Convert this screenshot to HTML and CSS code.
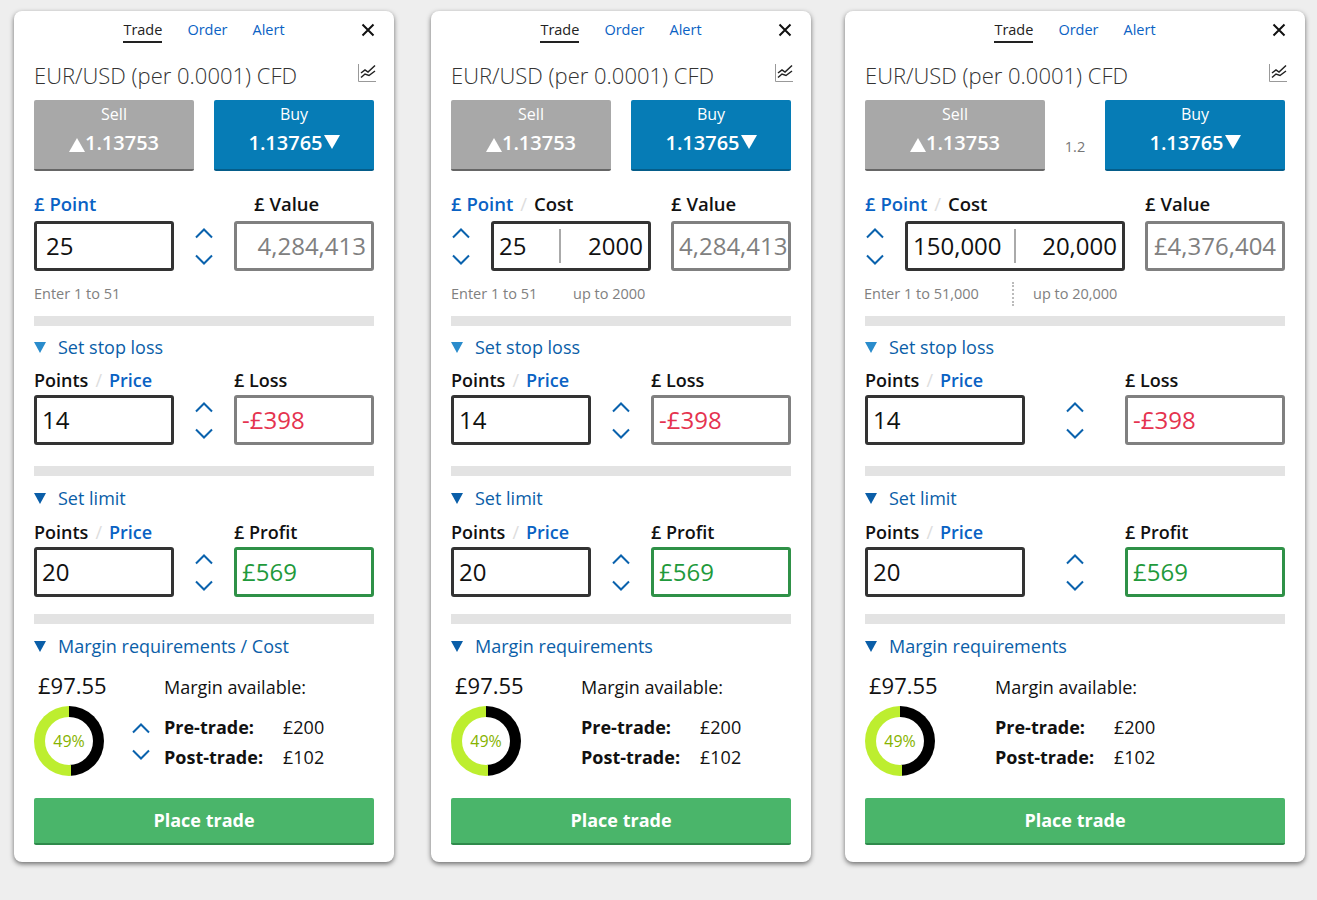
FILE: index.html
```html
<!DOCTYPE html>
<html lang="en">
<head>
    <meta charset="UTF-8">
    <title>Trade ticket</title>
    <link rel="stylesheet" href="styles.css">
</head>
<body>
    <svg class="defs" width="0" height="0">
        <symbol id="up" viewBox="0 0 20 14"><path d="M2 11.5 L10 3.5 L18 11.5" fill="none" stroke="#0a62ad" stroke-width="2"/></symbol>
        <symbol id="down" viewBox="0 0 20 14"><path d="M2 2.5 L10 10.5 L18 2.5" fill="none" stroke="#0a62ad" stroke-width="2"/></symbol>
        <symbol id="close" viewBox="0 0 14 14"><path d="M1.5 1.5 L12.5 12.5 M12.5 1.5 L1.5 12.5" fill="none" stroke="#111" stroke-width="2"/></symbol>
        <symbol id="chart" viewBox="0 0 18 18">
            <path d="M.5 0 V17.5 H18" fill="none" stroke="#999" stroke-width="1"/>
            <path d="M3 9 L7 6 L10 8 L17 1.5 M3 13.5 L7 10 L11 11.5 L17 7" fill="none" stroke="#222" stroke-width="1.5"/>
        </symbol>
    </svg>

    <!-- ticket 1 -->
    <div class="card">
        <div class="tabs">
            <span class="tab active">Trade</span>
            <span class="tab">Order</span>
            <span class="tab">Alert</span>
            <svg class="close"><use href="#close"/></svg>
        </div>
        <div class="title">
            <span>EUR/USD (per 0.0001) CFD</span>
            <svg class="chart"><use href="#chart"/></svg>
        </div>
        <div class="prices">
            <div class="price sell"><span class="price-label">Sell</span><span class="price-value"><i class="tri-up"></i>1.13753</span></div>
            <div class="price buy"><span class="price-label">Buy</span><span class="price-value">1.13765<i class="tri-down"></i></span></div>
        </div>

        <div class="labels labels-top">
            <span class="w-200"><b class="link">£ Point</b></span>
            <span class="lbl-value"><b>£ Value</b></span>
        </div>
        <div class="inputs">
            <div class="box box-dark w-140 pad-12">25</div>
            <div class="stepper w-60"><svg><use href="#up"/></svg><svg><use href="#down"/></svg></div>
            <div class="box box-grey w-140 align-right">4,284,413</div>
        </div>
        <div class="hints"><span>Enter 1 to 51</span></div>
        <div class="rule"></div>

        <div class="section"><i class="tri-section light"></i>Set stop loss</div>
        <div class="labels">
            <span class="w-200"><b>Points</b><em>/</em><b class="link">Price</b></span>
            <span><b>£ Loss</b></span>
        </div>
        <div class="inputs">
            <div class="box box-dark w-140">14</div>
            <div class="stepper w-60"><svg><use href="#up"/></svg><svg><use href="#down"/></svg></div>
            <div class="box box-grey w-140 loss">-£398</div>
        </div>
        <div class="rule rule-a"></div>

        <div class="section"><i class="tri-section"></i>Set limit</div>
        <div class="labels">
            <span class="w-200"><b>Points</b><em>/</em><b class="link">Price</b></span>
            <span><b>£ Profit</b></span>
        </div>
        <div class="inputs">
            <div class="box box-dark w-140">20</div>
            <div class="stepper w-60"><svg><use href="#up"/></svg><svg><use href="#down"/></svg></div>
            <div class="box box-green w-140 profit">£569</div>
        </div>
        <div class="rule rule-b"></div>

        <div class="section"><i class="tri-section"></i>Margin requirements / Cost</div>
        <div class="margin">
            <div class="margin-left">
                <div class="amount">£97.55</div>
                <div class="ring"><span>49%</span></div>
            </div>
            <div class="stepper margin-stepper"><svg><use href="#up"/></svg><svg><use href="#down"/></svg></div>
            <div class="margin-right">
                <div class="avail">Margin available:</div>
                <div class="trade-row"><b>Pre-trade:</b><span>£200</span></div>
                <div class="trade-row"><b>Post-trade:</b><span>£102</span></div>
            </div>
        </div>
        <div class="place">Place trade</div>
    </div>

    <!-- ticket 2 -->
    <div class="card">
        <div class="tabs">
            <span class="tab active">Trade</span>
            <span class="tab">Order</span>
            <span class="tab">Alert</span>
            <svg class="close"><use href="#close"/></svg>
        </div>
        <div class="title">
            <span>EUR/USD (per 0.0001) CFD</span>
            <svg class="chart"><use href="#chart"/></svg>
        </div>
        <div class="prices">
            <div class="price sell"><span class="price-label">Sell</span><span class="price-value"><i class="tri-up"></i>1.13753</span></div>
            <div class="price buy"><span class="price-label">Buy</span><span class="price-value">1.13765<i class="tri-down"></i></span></div>
        </div>

        <div class="labels labels-top">
            <span class="w-220"><b class="link">£ Point</b><em>/</em><b>Cost</b></span>
            <span><b>£ Value</b></span>
        </div>
        <div class="inputs">
            <div class="stepper w-40 left"><svg><use href="#up"/></svg><svg><use href="#down"/></svg></div>
            <div class="box box-dark w-160 split"><span class="split-a">25</span><span class="split-b">2000</span></div>
            <div class="box box-grey w-120 ml-20 align-right">4,284,413</div>
        </div>
        <div class="hints"><span class="hint-a2">Enter 1 to 51</span><span>up to 2000</span></div>
        <div class="rule"></div>

        <div class="section"><i class="tri-section light"></i>Set stop loss</div>
        <div class="labels">
            <span class="w-200"><b>Points</b><em>/</em><b class="link">Price</b></span>
            <span><b>£ Loss</b></span>
        </div>
        <div class="inputs">
            <div class="box box-dark w-140">14</div>
            <div class="stepper w-60"><svg><use href="#up"/></svg><svg><use href="#down"/></svg></div>
            <div class="box box-grey w-140 loss">-£398</div>
        </div>
        <div class="rule rule-a"></div>

        <div class="section"><i class="tri-section"></i>Set limit</div>
        <div class="labels">
            <span class="w-200"><b>Points</b><em>/</em><b class="link">Price</b></span>
            <span><b>£ Profit</b></span>
        </div>
        <div class="inputs">
            <div class="box box-dark w-140">20</div>
            <div class="stepper w-60"><svg><use href="#up"/></svg><svg><use href="#down"/></svg></div>
            <div class="box box-green w-140 profit">£569</div>
        </div>
        <div class="rule rule-b"></div>

        <div class="section"><i class="tri-section"></i>Margin requirements</div>
        <div class="margin">
            <div class="margin-left margin-left-wide">
                <div class="amount">£97.55</div>
                <div class="ring"><span>49%</span></div>
            </div>
            <div class="margin-right">
                <div class="avail">Margin available:</div>
                <div class="trade-row"><b>Pre-trade:</b><span>£200</span></div>
                <div class="trade-row"><b>Post-trade:</b><span>£102</span></div>
            </div>
        </div>
        <div class="place">Place trade</div>
    </div>

    <!-- ticket 3, the wide one -->
    <div class="card card-wide">
        <div class="tabs">
            <span class="tab active">Trade</span>
            <span class="tab">Order</span>
            <span class="tab">Alert</span>
            <svg class="close"><use href="#close"/></svg>
        </div>
        <div class="title">
            <span>EUR/USD (per 0.0001) CFD</span>
            <svg class="chart"><use href="#chart"/></svg>
        </div>
        <div class="prices prices-wide">
            <div class="price sell"><span class="price-label">Sell</span><span class="price-value"><i class="tri-up"></i>1.13753</span></div>
            <div class="spread">1.2</div>
            <div class="price buy"><span class="price-label">Buy</span><span class="price-value">1.13765<i class="tri-down"></i></span></div>
        </div>

        <div class="labels labels-top">
            <span class="w-280"><b class="link">£ Point</b><em>/</em><b>Cost</b></span>
            <span><b>£ Value</b></span>
        </div>
        <div class="inputs">
            <div class="stepper w-40 left"><svg><use href="#up"/></svg><svg><use href="#down"/></svg></div>
            <div class="box box-dark w-220 split"><span class="split-a wide">150,000</span><span class="split-b">20,000</span></div>
            <div class="box box-grey w-140 ml-20 center">£4,376,404</div>
        </div>
        <div class="hints hints-wide"><span class="hint-a3">Enter 1 to 51,000</span><span class="hint-b3">up to 20,000</span></div>
        <div class="rule"></div>

        <div class="section"><i class="tri-section light"></i>Set stop loss</div>
        <div class="labels">
            <span class="w-260"><b>Points</b><em>/</em><b class="link">Price</b></span>
            <span><b>£ Loss</b></span>
        </div>
        <div class="inputs">
            <div class="box box-dark w-160">14</div>
            <div class="stepper w-100"><svg><use href="#up"/></svg><svg><use href="#down"/></svg></div>
            <div class="box box-grey w-160 loss">-£398</div>
        </div>
        <div class="rule rule-a"></div>

        <div class="section"><i class="tri-section"></i>Set limit</div>
        <div class="labels">
            <span class="w-260"><b>Points</b><em>/</em><b class="link">Price</b></span>
            <span><b>£ Profit</b></span>
        </div>
        <div class="inputs">
            <div class="box box-dark w-160">20</div>
            <div class="stepper w-100"><svg><use href="#up"/></svg><svg><use href="#down"/></svg></div>
            <div class="box box-green w-160 profit">£569</div>
        </div>
        <div class="rule rule-b"></div>

        <div class="section"><i class="tri-section"></i>Margin requirements</div>
        <div class="margin">
            <div class="margin-left margin-left-wide">
                <div class="amount">£97.55</div>
                <div class="ring"><span>49%</span></div>
            </div>
            <div class="margin-right">
                <div class="avail">Margin available:</div>
                <div class="trade-row"><b>Pre-trade:</b><span>£200</span></div>
                <div class="trade-row"><b>Post-trade:</b><span>£102</span></div>
            </div>
        </div>
        <div class="place">Place trade</div>
    </div>
</body>
</html>
```

FILE: styles.css
```css
body {
    margin: 0;
    height: 900px;
    overflow: hidden;
    background-color: #eeeeee;
    font-family: "Open Sans", Arial, sans-serif;
    color: #111;
    display: flex;
    align-items: flex-start;
    gap: 37px;
    padding: 11px 0 0 14px;
    box-sizing: border-box;
}

.defs {
    position: absolute;
}

.card {
    width: 380px;
    height: 851px;
    flex-shrink: 0;
    box-sizing: border-box;
    background-color: #fff;
    border-radius: 8px;
    padding: 0 20px;
    box-shadow: 0 2px 5px rgba(0, 0, 0, 0.55);
}

.card-wide {
    width: 460px;
    margin-left: -3px;
}

/* tabs */
.tabs {
    height: 38px;
    display: flex;
    justify-content: center;
    align-items: flex-start;
    gap: 25px;
    padding-top: 9px;
    box-sizing: border-box;
    position: relative;
    font-size: 14.5px;
    line-height: 20px;
    color: #0a62c4;
}

.tab {
    height: 21px;
}

.tab.active {
    color: #222;
    border-bottom: 2px solid #222;
}

.close {
    position: absolute;
    right: -1px;
    top: 12px;
    width: 14px;
    height: 14px;
}

.title {
    height: 51px;
    display: flex;
    justify-content: space-between;
    align-items: center;
    font-size: 22px;
    font-weight: 300;
    color: #333;
}

.chart {
    width: 18px;
    height: 18px;
    margin-top: -3px;
    margin-right: -2px;
}

/* sell / buy */
.prices {
    display: flex;
    gap: 20px;
}

.prices-wide {
    gap: 0;
    justify-content: space-between;
}

.prices-wide .price {
    width: 180px;
}

.spread {
    width: 60px;
    text-align: center;
    color: #777;
    font-size: 14.5px;
    padding-top: 37px;
}

.price {
    width: 160px;
    height: 71px;
    box-sizing: border-box;
    border-radius: 2px;
    color: #fff;
    display: flex;
    flex-direction: column;
    align-items: center;
}

.sell {
    background-color: #a8a8a8;
    border-bottom: 2px solid #666;
}

.buy {
    background-color: #067cb6;
    border-bottom: 2px solid #055d8a;
}

.price-label {
    font-size: 16px;
    line-height: 22px;
    margin-top: 3px;
}

.price-value {
    font-size: 20px;
    font-weight: 600;
    line-height: 28px;
    margin-top: 4px;
    display: flex;
    align-items: center;
}

.tri-up {
    border-left: 8px solid transparent;
    border-right: 8px solid transparent;
    border-bottom: 14px solid #fff;
    margin-top: 3px;
}

.tri-down {
    border-left: 8px solid transparent;
    border-right: 8px solid transparent;
    border-top: 14px solid #fff;
    margin-top: -3px;
    margin-left: 1px;
}

/* field rows */
.labels {
    display: flex;
    height: 27px;
    font-size: 18px;
    line-height: 24px;
}

.labels-top {
    margin-top: 21px;
    height: 29px;
    font-size: 18.5px;
}

.labels b {
    font-weight: 600;
}

.labels em {
    font-style: normal;
    color: #ddd;
    font-weight: 400;
    margin: 0 7px;
}

.link {
    color: #0a62c4;
}

.lbl-value {
    padding-left: 20px;
}

.w-40 { width: 40px; }
.w-60 { width: 60px; }
.w-100 { width: 100px; }
.w-120 { width: 120px; }
.w-140 { width: 140px; }
.w-160 { width: 160px; }
.w-200 { width: 200px; }
.w-220 { width: 220px; }
.w-260 { width: 260px; }
.w-280 { width: 280px; }
.ml-20 { margin-left: 20px; }

.inputs {
    display: flex;
    height: 50px;
}

.box {
    height: 50px;
    box-sizing: border-box;
    border-radius: 3px;
    font-size: 24px;
    line-height: 44px;
    padding: 0 5px;
    background-color: #fff;
}

.box-dark {
    border: 3px solid #333;
}

.box-grey {
    border: 3px solid #808080;
    color: #808080;
}

.box-green {
    border: 3px solid #2f9147;
}

.pad-12 {
    padding-left: 9px;
}

.align-right {
    text-align: right;
}

.center {
    text-align: center;
    padding: 0;
}

.loss {
    color: #e5334f;
}

.profit {
    color: #1f9a3c;
}

.split {
    display: flex;
    justify-content: space-between;
    padding: 0 5px 0 0;
}

.split-a {
    width: 67px;
    padding-left: 5px;
    box-sizing: border-box;
    height: 34px;
    margin-top: 5px;
    line-height: 34px;
    border-right: 2px solid #aaa;
}

.split-a.wide {
    width: 108px;
}

.stepper {
    display: flex;
    flex-direction: column;
    justify-content: center;
    align-items: center;
    gap: 13px;
}

.stepper svg {
    width: 20px;
    height: 14px;
}

.stepper.left {
    align-items: flex-start;
}

.hints {
    height: 45px;
    display: flex;
    padding-top: 13px;
    box-sizing: border-box;
    font-size: 14.5px;
    line-height: 20px;
    color: #808080;
}

.hint-a2 {
    width: 122px;
}

.hint-a3 {
    width: 150px;
    margin-right: 19px;
    margin-left: -1px;
    position: relative;
}

.hint-b3 {
    position: relative;
}

/* dotted divider between the two hints */
.hint-a3::after {
    content: "";
    position: absolute;
    right: 0;
    top: -2px;
    height: 24px;
    border-right: 2px dotted #bbb;
}

.hints-wide .hint-b3::before {
    content: none;
}

.rule {
    height: 10px;
    background-color: #e3e3e3;
}

.rule-a {
    margin-top: 21px;
}

.rule-b {
    margin-top: 17px;
}

.section {
    height: 42px;
    display: flex;
    align-items: center;
    font-size: 18px;
    color: #0a5ea8;
}

.tri-section {
    width: 0;
    border-left: 6.5px solid transparent;
    border-right: 6.5px solid transparent;
    border-top: 11px solid #0a5ea8;
    margin-right: 12px;
}

.tri-section.light {
    border-top-color: #2a8ccc;
}

.rule-a + .section,
.rule-b + .section {
    height: 44px;
}

.rule-b + .section {
    height: 44px;
}

.section + .labels {
    margin-top: 0;
}

/* margin block */
.margin {
    display: flex;
    height: 130px;
}

.margin-left {
    width: 84px;
}

.margin-left-wide {
    width: 130px;
}

.amount {
    font-size: 22px;
    line-height: 30px;
    padding-left: 4px;
    margin-top: 2px;
}

.ring {
    width: 70px;
    height: 70px;
    margin-top: 6px;
    border-radius: 50%;
    background: conic-gradient(#000 0 49%, #bdee2f 49% 100%);
    display: flex;
    justify-content: center;
    align-items: center;
}

.ring span {
    width: 48px;
    height: 48px;
    border-radius: 50%;
    background-color: #fff;
    color: #86b300;
    font-size: 16px;
    line-height: 48px;
    text-align: center;
}

.margin-stepper {
    width: 46px;
    height: 70px;
    margin-top: 38px;
}

.margin-right {
    font-size: 18px;
    padding-top: 4px;
}

.avail {
    line-height: 30px;
    margin-bottom: 10px;
}

.trade-row {
    display: flex;
    line-height: 30px;
}

.trade-row b {
    width: 119px;
    font-weight: 700;
}

.place {
    height: 47px;
    box-sizing: border-box;
    background-color: #4ab56a;
    border-bottom: 2px solid #2f8a4b;
    border-radius: 2px;
    color: #fff;
    font-size: 18px;
    font-weight: 700;
    line-height: 45px;
    text-align: center;
}
```
